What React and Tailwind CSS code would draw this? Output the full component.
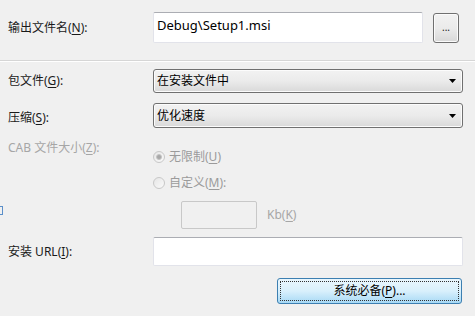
import React from "react";

const U = ({ children }) => <span className="underline underline-offset-2">{children}</span>;

function Dropdown({ text, tall }) {
  return (
    <div
      className={`ml-0 w-[310px] ${tall ? "h-[25px]" : "h-[24px]"} rounded-[3px] border border-[#707070] bg-gradient-to-b from-[#f2f2f2] via-[#ebebeb] to-[#d9d9d9] shadow-[inset_0_0_0_1px_#fcfcfc] flex items-center pl-[3px] pr-[6px]`}
    >
      <span className="flex-1 text-[12px] text-black leading-none">{text}</span>
      <svg width="7" height="4" viewBox="0 0 7 4">
        <path d="M0 0h7L3.5 4z" fill="#000" />
      </svg>
    </div>
  );
}

function TextBox({ className = "", children }) {
  return (
    <div
      className={`rounded-[2px] border border-[#e2e3ea] border-t-[#abadb3] bg-white ${className}`}
    >
      {children}
    </div>
  );
}

function Radio({ checked }) {
  return (
    <span className="w-[12px] h-[12px] rounded-full border border-[#c8c8c8] bg-gradient-to-br from-[#e6e6e6] to-[#fafafa] flex items-center justify-center">
      {checked && <span className="w-[6px] h-[6px] rounded-full bg-[#a8a8a8] border border-[#c4c4c4]" />}
    </span>
  );
}

export default function App() {
  return (
    <div
      className="relative w-[475px] h-[316px] bg-[#f0f0f0] overflow-hidden text-[12px] text-[#1a1a1a]"
      style={{ fontFamily: '"Noto Sans", "Noto Sans CJK SC", sans-serif' }}
    >
      {/* Row 1 */}
      <div className="mt-[12px] flex items-start h-[31px]">
        <div className="w-[153px] pl-[8px] h-[31px] flex items-center">
          输出文件名(<U>N</U>):
        </div>
        <TextBox className="w-[270px] h-[31px] pl-[3px] pt-[4px] text-[13px] leading-[16px] text-black">
          Debug\Setup1.msi
        </TextBox>
        <div className="ml-[10px] mt-[1px] w-[26px] h-[30px] rounded-[3px] border border-[#707070] bg-gradient-to-b from-[#f2f2f2] via-[#ebebeb] to-[#d8d8d8] shadow-[inset_0_0_0_1px_#fbfbfb] flex items-center justify-center text-[10px] leading-none pb-[2px]">
          ...
        </div>
      </div>

      {/* separator */}
      <div className="mt-[17px] h-px bg-[#d6d6d6]" />
      <div className="h-px bg-white" />

      {/* Dropdown 1 */}
      <div className="mt-[7px] flex items-center">
        <div className="w-[153px] pl-[8px]">
          包文件(<U>G</U>):
        </div>
        <Dropdown text="在安装文件中" />
      </div>

      {/* Dropdown 2 */}
      <div className="mt-[10px] flex items-center">
        <div className="w-[153px] pl-[8px] pt-[4px]">
          压缩(<U>S</U>):
        </div>
        <Dropdown text="优化速度" tall />
      </div>

      {/* CAB */}
      <div className="flex items-start">
        <div className="w-[153px] pl-[8px] mt-[12px] leading-[16px] text-[#a6a6a6]">
          CAB 文件大小(<U>Z</U>):
        </div>
        <div className="flex flex-col">
          <div className="mt-[21px] h-[15px] flex items-center gap-[4px] text-[#9b9b9b]">
            <Radio checked />
            <span>
              无限制(<U>U</U>)
            </span>
          </div>
          <div className="mt-[11px] h-[15px] flex items-center gap-[4px] text-[#9b9b9b]">
            <Radio />
            <span>
              自定义(<U>M</U>):
            </span>
          </div>
          <div className="mt-[11px] ml-[28px] flex items-center">
            <div className="w-[76px] h-[28px] rounded-[2px] border border-[#c8c8c8] bg-[#f0f0f0]" />
            <span className="ml-[10px] text-[#a6a6a6]">
              Kb(<U>K</U>)
            </span>
          </div>
        </div>
      </div>

      {/* URL */}
      <div className="mt-[8px] flex items-center">
        <div className="w-[153px] pl-[8px]">
          安装 URL(<U>I</U>):
        </div>
        <TextBox className="w-[310px] h-[29px]" />
      </div>

      {/* Button */}
      <div className="mt-[12px] flex justify-end pr-[13px]">
        <div className="w-[185px] h-[26px] rounded-[3px] border border-[#3c7fb1] bg-gradient-to-b from-[#eaf6fd] via-[#d9f0fc] to-[#a7d9f5] p-[2px]">
          <div className="w-full h-full border border-dotted border-[#333] flex items-center justify-center text-black">
            系统必备(<U>P</U>)...
          </div>
        </div>
      </div>

      {/* clipped blue mark on the left edge */}
      <div className="absolute left-0 top-[206px] w-[3px] h-[9px] border-y border-r border-[#5b8fc9]" />
    </div>
  );
}
